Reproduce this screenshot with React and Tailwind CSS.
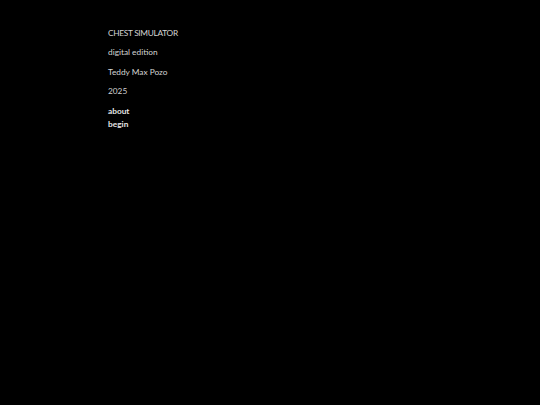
export default function App() {
  return (
    <div className="w-[540px] h-[405px] bg-black text-[#d4d4d4] font-['Lato',sans-serif] text-[8.3px] leading-none">
      <div className="pl-[108px] pt-[29px]">
        <p className="tracking-[-0.3px]">CHEST SIMULATOR</p>
        <p className="mt-[11.2px]">digital edition</p>
        <p className="mt-[11.2px]">Teddy Max Pozo</p>
        <p className="mt-[11.2px]">2025</p>
        <div className="mt-[11.2px] flex flex-col gap-[4.8px] font-bold text-[#e5e5e5]">
          <a>about</a>
          <a>begin</a>
        </div>
      </div>
    </div>
  );
}
